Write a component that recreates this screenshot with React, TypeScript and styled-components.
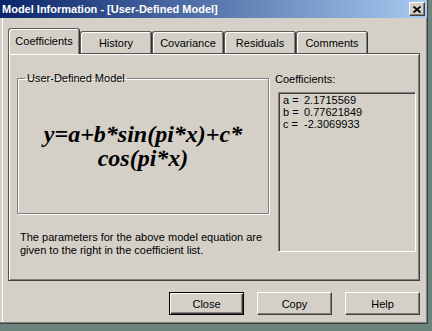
import React from 'react';
import styled, { createGlobalStyle } from 'styled-components';

const GlobalStyle = createGlobalStyle`
  html, body {
    margin: 0;
    padding: 0;
    background: #6b857c;
  }
  body {
    font-family: "Liberation Sans", Arial, sans-serif;
    font-size: 11px;
    color: #000;
  }
`;

const Screen = styled.div`
  width: 432px;
  height: 331px;
  overflow: hidden;
`;

const Window = styled.div`
  box-sizing: border-box;
  width: 428px;
  height: 324px;
  background: #d4d0c8;
  border-right: 1px solid #404040;
  border-bottom: 1px solid #404040;
  box-shadow: inset -1px -1px 0 #808080, inset 2px 0 0 #d4d0c8, inset 3px 0 0 #fff;
  display: flex;
  flex-direction: column;
`;

const TitleBar = styled.div`
  height: 18px;
  display: flex;
  align-items: center;
  justify-content: space-between;
  padding: 0 2px 0 2px;
  background: linear-gradient(to right, #0a246a, #a6caf0);
`;

const Title = styled.span`
  color: #fff;
  font-weight: bold;
  font-size: 11px;
  white-space: nowrap;
`;

const CloseBox = styled.div`
  box-sizing: border-box;
  width: 16px;
  height: 14px;
  display: flex;
  align-items: center;
  justify-content: center;
  background: #d4d0c8;
  border: 1px solid;
  border-color: #fff #404040 #404040 #fff;
  box-shadow: inset -1px -1px 0 #808080;
`;

const Body = styled.div`
  flex: 1;
  display: flex;
  flex-direction: column;
  padding: 10px 7px 0 8px;
`;

const TabRow = styled.div`
  display: flex;
  align-items: flex-end;
  height: 25px;
`;

const Tab = styled.div<{ $active?: boolean }>`
  box-sizing: border-box;
  position: relative;
  z-index: ${p => (p.$active ? 2 : 1)};
  width: 72px;
  height: ${p => (p.$active ? 26 : 22)}px;
  margin-bottom: ${p => (p.$active ? -1 : 0)}px;
  padding-bottom: ${p => (p.$active ? 2 : 0)}px;
  display: flex;
  align-items: center;
  justify-content: center;
  background: #d4d0c8;
  border: 1px solid #5c5c5c;
  border-right-color: #303030;
  border-bottom: none;
  border-radius: 3px 3px 0 0;
  box-shadow: inset 1px 1px 0 #fff, inset -1px 0 0 #808080;
  font-size: 11px;
`;

const Panel = styled.div`
  box-sizing: border-box;
  height: 228px;
  border: 1px solid #505050;
  border-right-color: #404040;
  border-bottom-color: #404040;
  box-shadow: inset 1px 1px 0 #fff, inset -1px -1px 0 #808080;
  display: grid;
  grid-template-columns: 252px 141px;
  column-gap: 6px;
  padding: 18px 0 0 8px;
`;

const LeftCol = styled.div`
  display: flex;
  flex-direction: column;
`;

const GroupBox = styled.fieldset`
  box-sizing: border-box;
  margin: 0;
  padding: 0;
  min-width: 0;
  width: 252px;
  height: 142px;
  border: 1px solid #808080;
  box-shadow: 1px 1px 0 #fff, inset 1px 1px 0 #fff;
`;

const Legend = styled.legend`
  margin-left: 7px;
  padding: 0 2px;
  font-size: 11px;
  line-height: 13px;
`;

const EquationArea = styled.div`
  height: 122px;
  display: flex;
  align-items: center;
  justify-content: center;
`;

const Equation = styled.div`
  font-family: "Liberation Serif", "Times New Roman", serif;
  font-weight: bold;
  font-style: italic;
  font-size: 24px;
  line-height: 24px;
  text-align: center;
  white-space: nowrap;
`;

const Description = styled.p`
  margin: 17px 0 0 3px;
  font-size: 11px;
  line-height: 13px;
`;

const RightCol = styled.div`
  display: flex;
  flex-direction: column;
`;

const ListLabel = styled.div`
  margin-top: 1px;
  font-size: 11px;
  line-height: 13px;
`;

const ListBox = styled.div`
  box-sizing: border-box;
  margin: 6px 0 0 3px;
  width: 138px;
  height: 160px;
  border: 1px solid;
  border-color: #808080 #fff #fff #808080;
  box-shadow: inset 1px 1px 0 #404040, inset -1px -1px 0 #d4d0c8;
  padding: 1px 0 0 4px;
`;

const ListRow = styled.div`
  display: grid;
  grid-template-columns: 21px auto;
  font-size: 11px;
  line-height: 12px;
`;

const ButtonRow = styled.div`
  display: flex;
  justify-content: flex-end;
  gap: 13px;
  margin-top: 11px;
`;

const Button = styled.div<{ $default?: boolean }>`
  box-sizing: border-box;
  width: 75px;
  height: 23px;
  display: flex;
  align-items: center;
  justify-content: center;
  background: #d4d0c8;
  font-size: 11px;
  border: 1px solid;
  border-color: ${p => (p.$default ? '#000' : '#fff #404040 #404040 #fff')};
  box-shadow: ${p =>
    p.$default
      ? 'inset 1px 1px 0 #fff, inset -1px -1px 0 #404040, inset -2px -2px 0 #808080'
      : 'inset -1px -1px 0 #808080'};
`;

const coefficients = [
  { name: 'a =', value: '2.1715569' },
  { name: 'b =', value: '0.77621849' },
  { name: 'c =', value: '-2.3069933' },
];

const tabs = ['Coefficients', 'History', 'Covariance', 'Residuals', 'Comments'];

const App: React.FC = () => {
  return (
    <Screen>
      <GlobalStyle />
      <Window>
        <TitleBar>
          <Title>Model Information - [User-Defined Model]</Title>
          <CloseBox>
            <svg width="8" height="7" viewBox="0 0 8 7">
              <path d="M0.5 0.5 L7.5 6.5 M7.5 0.5 L0.5 6.5" stroke="#000" strokeWidth="1.8" fill="none" />
            </svg>
          </CloseBox>
        </TitleBar>
        <Body>
          <TabRow>
            {tabs.map((t, i) => (
              <Tab key={t} $active={i === 0}>{t}</Tab>
            ))}
          </TabRow>
          <Panel>
            <LeftCol>
              <GroupBox>
                <Legend>User-Defined Model</Legend>
                <EquationArea>
                  <Equation>
                    y=a+b*sin(pi*x)+c*
                    <br />
                    cos(pi*x)
                  </Equation>
                </EquationArea>
              </GroupBox>
              <Description>
                The parameters for the above model equation are given to the right in the coefficient list.
              </Description>
            </LeftCol>
            <RightCol>
              <ListLabel>Coefficients:</ListLabel>
              <ListBox>
                {coefficients.map(c => (
                  <ListRow key={c.name}>
                    <span>{c.name}</span>
                    <span>{c.value}</span>
                  </ListRow>
                ))}
              </ListBox>
            </RightCol>
          </Panel>
          <ButtonRow>
            <Button $default>Close</Button>
            <Button>Copy</Button>
            <Button>Help</Button>
          </ButtonRow>
        </Body>
      </Window>
    </Screen>
  );
};

export default App;
